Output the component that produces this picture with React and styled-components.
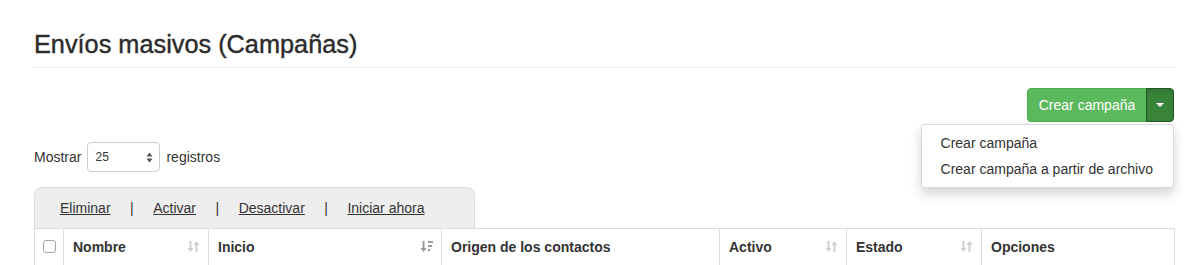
import React from "react";
import styled, { createGlobalStyle } from "styled-components";

const GlobalStyle = createGlobalStyle`
    html, body {
        margin: 0;
        padding: 0;
        background: #fff;
    }
    body {
        font-family: "Helvetica Neue", Helvetica, "Liberation Sans", Arial, sans-serif;
        font-size: 14px;
        line-height: 20px;
        color: #333;
    }
`;

const Page = styled.div`
    padding: 31px 10px 0 34px;
`;

const PageHeader = styled.div`
    padding-bottom: 8px;
    border-bottom: 1px solid #eee;
`;

const Title = styled.h1`
    margin: 0;
    font-size: 25.3px;
    line-height: 1.1;
    font-weight: 500;
    color: #2b2b2b;
    -webkit-text-stroke: 0.4px #2b2b2b;
`;

const Toolbar = styled.div`
    display: flex;
    justify-content: flex-end;
    margin-top: 20px;
`;

const BtnGroup = styled.div`
    position: relative;
    display: flex;
`;

const Button = styled.button`
    box-sizing: border-box;
    font-family: inherit;
    font-size: 14px;
    line-height: 20px;
    height: 34px;
    color: #fff;
    cursor: pointer;
    border: 1px solid ${(p) => (p.$dark ? "#255625" : "#4cae4c")};
    background: ${(p) => (p.$dark ? "#398439" : "#5cb85c")};
    padding: 6px 0;
    border-radius: ${(p) => (p.$dark ? "0 4px 4px 0" : "4px 0 0 4px")};
    margin-left: ${(p) => (p.$dark ? "-1px" : "0")};
    width: ${(p) => (p.$dark ? "28px" : "120px")};
    display: flex;
    align-items: center;
    justify-content: center;
    box-shadow: ${(p) => (p.$dark ? "inset 0 3px 5px rgba(0,0,0,.125)" : "none")};
`;

const Caret = styled.span`
    display: inline-block;
    width: 0;
    height: 0;
    border-top: 4px solid #fff;
    border-left: 4px solid transparent;
    border-right: 4px solid transparent;
`;

const Menu = styled.ul`
    position: absolute;
    right: 0;
    top: 36px;
    margin: 0;
    padding: 5px 0;
    list-style: none;
    background: #fff;
    border: 1px solid rgba(0, 0, 0, 0.15);
    border-radius: 4px;
    box-shadow: 0 6px 12px rgba(0, 0, 0, 0.175);
    z-index: 10;
    white-space: nowrap;
`;

const MenuItem = styled.li`
    padding: 3px 20px 3px 19px;
    line-height: 20px;
    color: #333;
`;

const LengthRow = styled.div`
    display: flex;
    align-items: center;
    gap: 6px;
    margin-top: 20px;
    height: 30px;
`;

const SelectBox = styled.div`
    position: relative;
    box-sizing: border-box;
    width: 73px;
    height: 30px;
    border: 1px solid #ccc;
    border-radius: 4px;
    font-size: 12px;
    line-height: 28px;
    padding-left: 7px;
    color: #333;
    background: #fff;
`;

const SelectArrows = styled.svg`
    position: absolute;
    right: 6px;
    top: 9px;
`;

const ActionBar = styled.div`
    display: inline-flex;
    box-sizing: border-box;
    width: 441px;
    margin-top: 15px;
    padding: 10px 25px;
    background: #eee;
    border: 1px solid #ddd;
    border-bottom: none;
    border-radius: 8px 8px 0 0;
    gap: 19.5px;
    vertical-align: top;
`;

const ActionLink = styled.a`
    color: #333;
    text-decoration: underline;
    cursor: pointer;
`;

const Sep = styled.span`
    color: #333;
`;

const Table = styled.table`
    width: 100%;
    border-collapse: collapse;
    table-layout: fixed;
    border: 1px solid #ddd;
`;

const Th = styled.th`
    box-sizing: border-box;
    padding: 8px ${(p) => (p.$check ? "0" : "8px 8px 9px")};
    text-align: ${(p) => (p.$check ? "center" : "left")};
    font-weight: bold;
    border: 1px solid #ddd;
    border-bottom-width: 2px;
    width: ${(p) => p.$w}px;
    vertical-align: middle;
`;

const ThInner = styled.div`
    display: flex;
    align-items: center;
    justify-content: space-between;
`;

const Check = styled.input`
    appearance: none;
    display: block;
    margin: 0 auto;
    width: 13px;
    height: 13px;
    border: 1px solid #a5a5a5;
    border-radius: 3px;
    background: #fff;
`;

const SortIcon = ({ active }) => (
    <svg width="13" height="13" viewBox="0 0 13 13">
        <g fill={active ? "#9a9a9a" : "#cfcfcf"}>
            <rect x="2.5" y="1" width="2" height="8" />
            <polygon points="0.5,8 6.5,8 3.5,12" />
            {active ? (
                <>
                    <rect x="8" y="1" width="5" height="2" />
                    <rect x="8" y="5" width="4" height="2" />
                    <rect x="8" y="9" width="2" height="2" />
                </>
            ) : (
                <>
                    <rect x="8.5" y="4" width="2" height="8" />
                    <polygon points="6.5,5 12.5,5 9.5,1" />
                </>
            )}
        </g>
    </svg>
);

const columns = [
    { label: "Nombre", w: 145, sort: "both" },
    { label: "Inicio", w: 233, sort: "desc" },
    { label: "Origen de los contactos", w: 278 },
    { label: "Activo", w: 127, sort: "both" },
    { label: "Estado", w: 135, sort: "both" },
    { label: "Opciones", w: 193 },
];

const actions = ["Eliminar", "Activar", "Desactivar", "Iniciar ahora"];

export default function App() {
    return (
        <Page>
            <GlobalStyle />
            <PageHeader>
                <Title>Envíos masivos (Campañas)</Title>
            </PageHeader>

            <Toolbar>
                <BtnGroup>
                    <Button>Crear campaña</Button>
                    <Button $dark>
                        <Caret />
                    </Button>
                    <Menu>
                        <MenuItem>Crear campaña</MenuItem>
                        <MenuItem>Crear campaña a partir de archivo</MenuItem>
                    </Menu>
                </BtnGroup>
            </Toolbar>

            <LengthRow>
                <span>Mostrar</span>
                <SelectBox>
                    25
                    <SelectArrows width="7" height="11" viewBox="0 0 7 11">
                        <polygon points="0.5,4.5 6.5,4.5 3.5,0.5" fill="#555" />
                        <polygon points="0.5,6.5 6.5,6.5 3.5,10.5" fill="#555" />
                    </SelectArrows>
                </SelectBox>
                <span>registros</span>
            </LengthRow>

            <ActionBar>
                {actions.map((a, i) => (
                    <React.Fragment key={a}>
                        {i > 0 && <Sep>|</Sep>}
                        <ActionLink>{a}</ActionLink>
                    </React.Fragment>
                ))}
            </ActionBar>

            <Table>
                <thead>
                    <tr>
                        <Th $check $w={29}>
                            <Check type="checkbox" />
                        </Th>
                        {columns.map((c) => (
                            <Th key={c.label} $w={c.w}>
                                <ThInner>
                                    <span>{c.label}</span>
                                    {c.sort && <SortIcon active={c.sort === "desc"} />}
                                </ThInner>
                            </Th>
                        ))}
                    </tr>
                </thead>
            </Table>
        </Page>
    );
}
